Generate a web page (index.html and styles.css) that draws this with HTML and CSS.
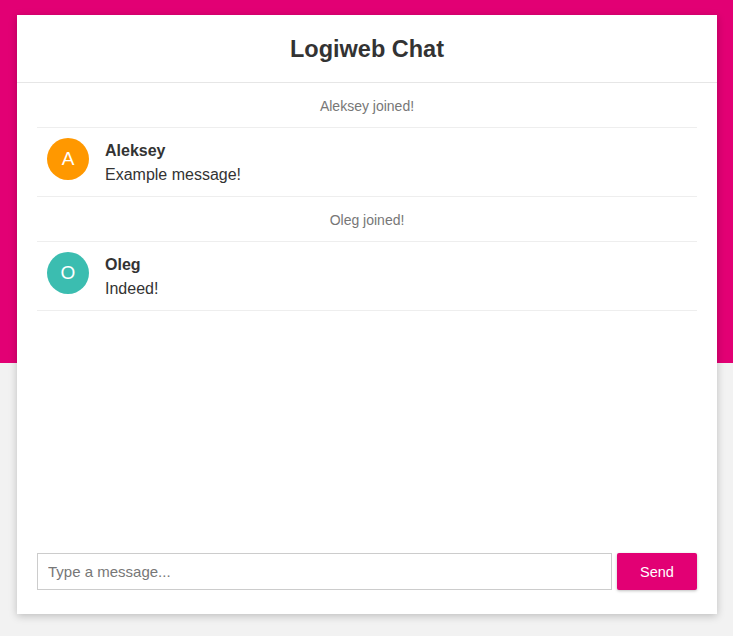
FILE: index.html
```html
<!DOCTYPE html>
<html>
<head>
<meta charset="utf-8">
<link rel="stylesheet" href="styles.css">
</head>
<body>
<div class="band"></div>
<div class="page">
  <div class="card">
    <header class="header"><h1 class="title">Logiweb Chat</h1></header>
    <ul class="feed">
      <li class="notice">Aleksey joined!</li>
      <li class="msg">
        <div class="avatar orange">A</div>
        <div class="body"><div class="name">Aleksey</div><div class="text">Example message!</div></div>
      </li>
      <li class="notice">Oleg joined!</li>
      <li class="msg">
        <div class="avatar teal">O</div>
        <div class="body"><div class="name">Oleg</div><div class="text">Indeed!</div></div>
      </li>
    </ul>
    <form class="composer">
      <input class="input" type="text" placeholder="Type a message..." autofocus>
      <button class="send" type="button">Send</button>
    </form>
  </div>
</div>
</body>
</html>
```
FILE: styles.css
```css
* { box-sizing: border-box; }
html, body { margin: 0; padding: 0; }
body {
  background: #f2f2f2;
  font-family: "Liberation Sans", Arial, sans-serif;
  color: #333;
  height: 636px;
  overflow: hidden;
}
.band {
  position: absolute;
  left: 0; top: 0; right: 0;
  height: 363px;
  background: #e20074;
}
.page {
  position: relative;
  padding: 15px 16px 0 17px;
}
.card {
  width: 700px;
  height: 599px;
  background: #fff;
  box-shadow: 0 2px 8px rgba(0,0,0,0.22);
  display: flex;
  flex-direction: column;
}
.header {
  height: 68px;
  border-bottom: 1px solid #e6e6e6;
  display: flex;
  align-items: center;
  justify-content: center;
}
.title {
  margin: 0;
  font-size: 23.5px;
  font-weight: bold;
  color: #333;
  padding-top: 1px;
}
.feed {
  list-style: none;
  margin: 0;
  padding: 0 20px;
  flex: 1;
}
.notice {
  padding: 11px 10px 9px;
  line-height: 24px;
  font-size: 14px;
  color: #777;
  text-align: center;
  border-bottom: 1px solid #eee;
}
.msg {
  display: flex;
  gap: 16px;
  padding: 10px;
  border-bottom: 1px solid #eee;
}
.avatar {
  width: 42px;
  height: 42px;
  border-radius: 50%;
  color: #fff;
  font-size: 19px;
  display: flex;
  align-items: center;
  justify-content: center;
  flex-shrink: 0;
}
.orange { background: #ff9800; }
.teal { background: #3bbdb0; }
.body {
  padding-top: 1px;
  margin-bottom: -1px;
}
.name {
  font-weight: bold;
  font-size: 16px;
  line-height: 24px;
}
.text {
  font-size: 16px;
  line-height: 24px;
}
.composer {
  display: flex;
  gap: 5px;
  padding: 0 20px 24px;
  margin: 0;
}
.input {
  flex: 1;
  height: 37px;
  border: 1px solid #ccc;
  padding: 0 10px;
  font-family: "Liberation Sans", Arial, sans-serif;
  font-size: 15px;
  color: #333;
  outline: none;
}
.input::placeholder { color: #777; }
.send {
  width: 80px;
  height: 37px;
  border: none;
  border-radius: 2px;
  background: #e20074;
  color: #fff;
  font-family: "Liberation Sans", Arial, sans-serif;
  font-size: 14.5px;
  box-shadow: 0 1px 3px rgba(0,0,0,0.25);
}
```
